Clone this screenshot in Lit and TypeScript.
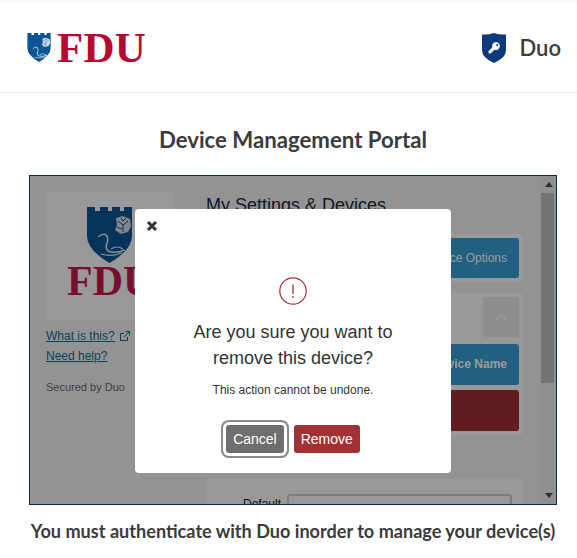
import { LitElement, html, css, svg } from "lit";
import { customElement } from "lit/decorators.js";

const crest = (w: number, h: number) => html`<svg width=${w} height=${h} viewBox="0 0 45 56" aria-hidden="true">
  <path fill="#0b5594" d="M0 0H8V4H13V0H21V4H25V0H33V4H37V0H45V29Q45 43 22.5 56Q0 43 0 29Z"/>
  ${svg`<path fill="none" stroke="#e8eef4" stroke-width="1.5" d="M11 30Q16 26 19 28Q22 31 20 36Q18 41 21 44Q28 47 38 43"/>
  <path fill="none" stroke="#e8eef4" stroke-width="1.2" d="M24 42Q30 38 36 42M14 47Q24 50 35 46"/>
  <path fill="#d5dfe8" d="M29 11L36 9L43 12L44 19L41 25L34 27L28 23L30 18Z"/>
  <path fill="none" stroke="#0b5594" stroke-width="1" d="M31 14L36 18L41 14M36 18V25M34 11L36 14L39 11M30 20L35 22"/>`}
</svg>`;

@customElement("app-root")
export class AppRoot extends LitElement {
  static styles = css`
    :host { display: block; width: 577px; height: 558px; overflow: hidden; background: #fff; font-family: "Liberation Sans", Arial, sans-serif; }
    .strip { height: 3px; background: #f8f8fa; }
    .header { height: 90px; box-sizing: border-box; display: flex; align-items: center; justify-content: space-between; padding: 0 16px 0 27px; border-bottom: 1px solid #ebebf0; }
    .brand { display: flex; align-items: center; gap: 6px; }
    .fdu { font-family: "Liberation Serif", serif; font-weight: 700; font-size: 43px; line-height: 1; letter-spacing: 0.2px; color: #b40a30; }
    .duo { display: flex; align-items: center; gap: 14px; font-family: Lato, sans-serif; font-size: 22px; font-weight: 600; color: #3c3c3c; }
    .main { width: 528px; margin-left: 29px; text-align: center; font-family: Lato, sans-serif; font-weight: 700; color: #3b3b3b; }
    h1 { margin: 27px 0 15px; font-size: 22.2px; line-height: 40px; font-weight: 700; }
    .foot { margin: 12px 0 0; font-size: 18.1px; line-height: 28px; white-space: nowrap; }
    .frame { position: relative; height: 330px; box-sizing: border-box; border: 1px solid #14263a; display: flex; overflow: hidden; background: #f6f6f6; text-align: left; font-family: "Liberation Sans", Arial, sans-serif; font-weight: 400; }
    .doc { flex: 1; display: flex; gap: 32px; padding: 16px 0 0 16px; }
    .side { width: 128px; flex: none; color: #333; font-size: 12px; }
    .logo { height: 128px; background: #fff; display: flex; flex-direction: column; align-items: flex-start; padding: 15px 0 0 21px; box-sizing: border-box; border-radius: 2px; }
    .logo .crest { margin-left: 20px; height: 60px; }
    .logo .big { font-family: "Liberation Serif", serif; font-weight: 700; font-size: 42px; line-height: 28px; color: #c81b4b; }
    .side a { display: block; color: #0e6f94; text-decoration: underline; line-height: 14px; }
    .what { margin-top: 9px; display: flex !important; align-items: center; gap: 5px; }
    .what span { text-decoration: underline; }
    .need { margin-top: 6px; }
    .secured { margin-top: 17px; font-size: 11px; line-height: 14px; color: #6b6b6b; }
    .content { width: 317px; flex: none; }
    .content h2 { margin: 0 0 16px; font-size: 18px; line-height: 26px; font-weight: 400; color: #1a2b3c; white-space: nowrap; }
    .panel { background: #fff; border-radius: 4px; padding: 4px; }
    .panel + .panel { margin-top: 11px; }
    .btn { height: 40px; line-height: 40px; border-radius: 3px; text-align: right; padding-right: 12px; font-size: 12px; color: #fff; background: #38a0d5; }
    .btn.name { height: 41px; line-height: 41px; margin-top: 7px; font-weight: 700; }
    .btn.red { height: 41px; margin-top: 5px; background: #a13338; }
    .up { width: 36px; height: 40px; margin-left: auto; background: #ececec; border-radius: 3px; display: flex; align-items: center; justify-content: center; }
    .last { margin-top: 44px !important; height: 60px; padding: 15px 11px 0 37px; display: flex; gap: 6px; font-size: 12px; color: #222; }
    .last span { line-height: 20px; }
    .field { flex: 1; height: 40px; border: 2px solid #d0d0d0; border-radius: 3px; box-sizing: border-box; }
    .scroll { width: 15px; flex: none; background: #f1f1f1; display: flex; flex-direction: column; align-items: stretch; }
    .arrow { height: 17px; display: flex; align-items: center; justify-content: center; flex: none; }
    .thumb { height: 190px; background: #c1c1c1; margin-right: 2px; flex: none; }
    .gap { flex: 1; }
    .overlay { position: absolute; inset: 0; background: rgba(0, 0, 0, 0.4); padding: 33px 0 0 105px; box-sizing: border-box; }
    .modal { position: relative; width: 316px; height: 264px; background: #fff; border-radius: 4px; box-sizing: border-box; padding-top: 68px; display: flex; flex-direction: column; align-items: center; color: #333; }
    .close { position: absolute; left: 11px; top: 11px; display: block; }
    .q { margin: 14px 0 0; font-size: 18px; line-height: 26px; text-align: center; }
    .sub { margin: 11px 0 0; font-size: 12px; line-height: 17px; }
    .actions { display: flex; gap: 10px; margin-top: 26px; }
    button { height: 28px; border: 0; border-radius: 3px; padding: 0 7px; font: 14px "Liberation Sans", Arial, sans-serif; color: #fff; }
    .cancel { background: #6e6e6e; box-shadow: 0 0 0 3px #fff, 0 0 0 5px #8a8a8a; }
    .remove { background: #a03236; }
  `;

  render() {
    return html`
      <div class="strip"></div>
      <header class="header">
        <div class="brand">${crest(24, 29)}<span class="fdu">FDU</span></div>
        <div class="duo">
          <svg width="24" height="30" viewBox="0 0 24 30" aria-hidden="true">
            <path fill="#0d3a7d" d="M12 0Q18 2 24 1.5V17Q24 25 12 30Q0 25 0 17V1.5Q6 2 12 0Z"/>
            <path fill="#fff" fill-rule="evenodd" d="M14 9a4 4 0 1 1-1.4 7.8L8.5 20.5H6.8L6.3 18.6L10.3 14.3A4 4 0 0 1 14 9ZM15.2 11a1 1 0 1 0 .01 0Z"/>
          </svg>
          <span>Duo</span>
        </div>
      </header>
      <main class="main">
        <h1>Device Management Portal</h1>
        <div class="frame">
          <div class="doc">
            <div class="side">
              <div class="logo">
                <div class="crest">${crest(45, 56)}</div>
                <div class="big">FDU</div>
              </div>
              <a class="what"><span>What is this?</span>
                <svg width="10" height="10" viewBox="0 0 10 10" aria-hidden="true"><path fill="none" stroke="#0e6f94" d="M7.5 6V9.5H.5V2.5H4M5.5.5H9.5V4.5M9.5.5L4 6"/></svg>
              </a>
              <a class="need">Need help?</a>
              <div class="secured">Secured by Duo</div>
            </div>
            <div class="content">
              <h2>My Settings &amp; Devices</h2>
              <div class="panel"><div class="btn">Device Options</div></div>
              <div class="panel">
                <div class="up"><svg width="12" height="8" viewBox="0 0 12 8" aria-hidden="true"><path fill="none" stroke="#fff" stroke-width="2.4" d="M1 7L6 2L11 7"/></svg></div>
                <div class="btn name">Change Device Name</div>
                <div class="btn red"></div>
              </div>
              <div class="panel last"><span>Default</span><div class="field"></div></div>
            </div>
          </div>
          <div class="scroll">
            <div class="arrow"><svg width="8" height="5" viewBox="0 0 8 5" aria-hidden="true"><path fill="#505050" d="M4 0L8 5H0Z"/></svg></div>
            <div class="thumb"></div>
            <div class="gap"></div>
            <div class="arrow"><svg width="8" height="5" viewBox="0 0 8 5" aria-hidden="true"><path fill="#505050" d="M0 0H8L4 5Z"/></svg></div>
          </div>
          <div class="overlay">
            <div class="modal" role="dialog">
              <svg class="close" width="12" height="12" viewBox="0 0 12 12" aria-label="close"><path fill="none" stroke="#333" stroke-width="3" d="M2 2L10 10M10 2L2 10"/></svg>
              <svg width="28" height="28" viewBox="0 0 28 28" aria-hidden="true">
                <circle cx="14" cy="14" r="13.2" fill="none" stroke="#a03236" stroke-width="1.2"/>
                <path fill="none" stroke="#a03236" stroke-width="1.3" d="M14 7.5V17M14 19V21"/>
              </svg>
              <p class="q">Are you sure you want to<br />remove this device?</p>
              <p class="sub">This action cannot be undone.</p>
              <div class="actions">
                <button class="cancel">Cancel</button>
                <button class="remove">Remove</button>
              </div>
            </div>
          </div>
        </div>
        <p class="foot">You must authenticate with Duo inorder to manage your device(s)</p>
      </main>
    `;
  }
}
